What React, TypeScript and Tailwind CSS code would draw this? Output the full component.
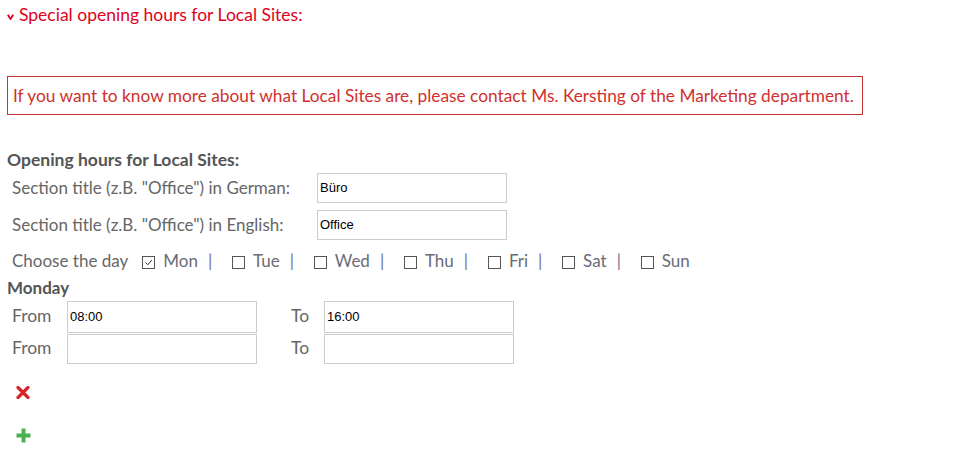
import React, { useState } from 'react';

const days = ['Mon', 'Tue', 'Wed', 'Thu', 'Fri', 'Sat', 'Sun'];

const inputCls =
  "h-[30px] w-[190px] border border-[#cccccc] px-[2px] text-[13px] text-black font-['Liberation_Sans',sans-serif] outline-none";

const App: React.FC = () => {
  const [checked, setChecked] = useState<string[]>(['Mon']);

  const toggle = (d: string) => {
    setChecked(checked.includes(d) ? checked.filter(x => x !== d) : [...checked, d]);
  };

  return (
    <div className="w-[964px] h-[470px] bg-white font-['Lato',sans-serif] text-[17.5px] overflow-hidden">
      <div className="flex items-center gap-[5px] pl-[7px] pt-[3px] text-[#e2001a] leading-[24px]">
        <svg width="7" height="6" viewBox="0 0 7 6" className="mt-[3px]">
          <path d="M0.8 0.8 L3.5 5 L6.2 0.8" fill="none" stroke="#e2001a" strokeWidth="1.8" />
        </svg>
        <span>Special opening hours for Local Sites:</span>
      </div>

      <div className="mt-[49px] ml-[7px] w-[856px] h-[39px] border border-[#c33432] flex items-center pl-[5px] text-[#d0312d] text-[17.3px] whitespace-nowrap">
        If you want to know more about what Local Sites are, please contact Ms. Kersting of the Marketing department.
      </div>

      <div className="mt-[35px] pl-[7px] font-bold text-[#555] leading-[19px]">Opening hours for Local Sites:</div>

      <div className="pl-[12px] text-[#666] text-[17px]">
        <div className="flex items-center h-[37px]">
          <span className="w-[305px]">Section title (z.B. "Office") in German:</span>
          <input defaultValue="Büro" className={inputCls} />
        </div>
        <div className="flex items-center h-[37px]">
          <span className="w-[305px]">Section title (z.B. "Office") in English:</span>
          <input defaultValue="Office" className={inputCls} />
        </div>
        <div className="flex items-center h-[28px] mt-[4px]">
          <span className="mr-[14px]">Choose the day</span>
          {days.map((d, i) => (
            <label key={d} className="flex items-center cursor-pointer" onClick={() => toggle(d)}>
              <span className="w-[13px] h-[13px] border border-[#555] flex items-center justify-center mr-[8px] mt-[3px]">
                {checked.includes(d) && (
                  <svg width="9" height="9" viewBox="0 0 9 9">
                    <path d="M1.5 4.5 L3.8 6.8 L7.8 2" fill="none" stroke="#333" strokeWidth="1" />
                  </svg>
                )}
              </span>
              <span className="text-[#6b6b78]">{d}</span>
              {i < days.length - 1 && <span className="ml-[10px] mr-[19.8px] text-[#6f7590]">|</span>}
            </label>
          ))}
        </div>
      </div>

      <div className="pl-[7px] font-bold text-[#555] text-[17px] leading-[24px] mt-[1px]">Monday</div>

      <div className="pl-[12px] text-[#666] text-[17.5px]">
        {[['08:00', '16:00'], ['', '']].map((row, i) => (
          <div key={i} className={`flex items-center ${i === 0 ? 'h-[33px]' : 'h-[31px]'}`}>
            <span className="w-[55px]">From</span>
            <input defaultValue={row[0]} className={inputCls + (i === 0 ? ' h-[32px]' : '')} />
            <span className="ml-[34px] w-[33px]">To</span>
            <input defaultValue={row[1]} className={inputCls + (i === 0 ? ' h-[32px]' : '')} />
          </div>
        ))}
      </div>

      <div className="pl-[16px] mt-[22px] flex flex-col gap-[29px]">
        <svg width="14" height="13" viewBox="0 0 14 13">
          <path d="M2 1.5 L12 11.5 M12 1.5 L2 11.5" stroke="#d9252a" strokeWidth="3.2" strokeLinecap="round" />
        </svg>
        <svg width="15" height="15" viewBox="0 0 15 15">
          <path d="M7.5 0.5 V14.5 M0.5 7.5 H14.5" stroke="#4caf50" strokeWidth="4" />
        </svg>
      </div>
    </div>
  );
};

export default App;
